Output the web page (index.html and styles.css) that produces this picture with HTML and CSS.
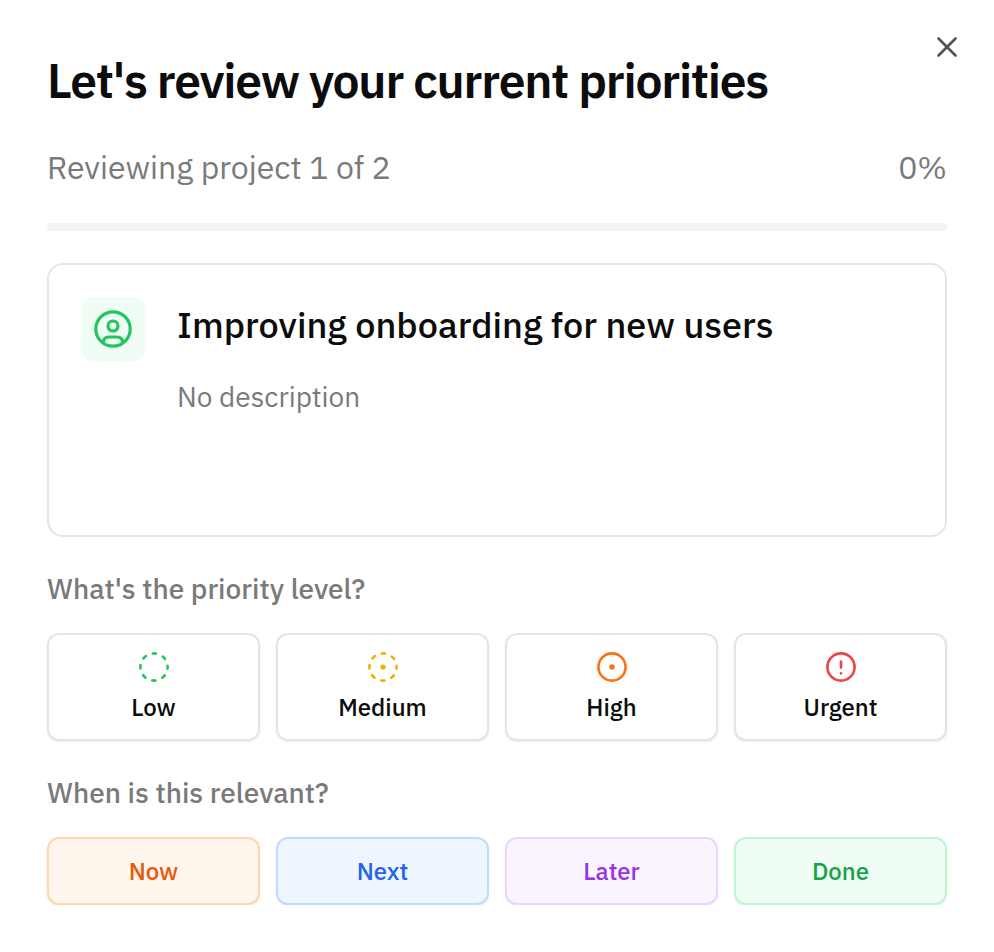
FILE: index.html
```html
<!DOCTYPE html>
<html lang="en">

<head>
    <meta charset="UTF-8">
    <title>Review priorities</title>
    <link rel="stylesheet" href="styles.css">
</head>

<body>
    <div class="modal">
        <button class="close" aria-label="Close">
            <svg width="28" height="28" viewBox="0 0 28 28" fill="none" stroke="#525252" stroke-width="2.6" stroke-linecap="round">
                <path d="M5.5 5.5 L22.5 22.5 M22.5 5.5 L5.5 22.5" />
            </svg>
        </button>

        <h1>Let's review your current priorities</h1>

        <div class="progress-info">
            <span>Reviewing project 1 of 2</span>
            <span>0%</span>
        </div>
        <div class="progress"></div>

        <div class="project">
            <div class="project-icon">
                <svg width="40" height="40" viewBox="0 0 40 40" fill="none" stroke="#22c55e" stroke-width="3.2">
                    <circle cx="20" cy="20" r="17.2" />
                    <circle cx="20" cy="17" r="5" />
                    <path d="M10.5 33 C10.5 29.5 13 28 16 28 H24 C27 28 29.5 29.5 29.5 33" />
                </svg>
            </div>
            <div class="project-text">
                <h2>Improving onboarding for new users</h2>
                <p>No description</p>
            </div>
        </div>

        <h3>What's the priority level?</h3>
        <div class="options">
            <button class="option">
                <svg width="30" height="30" viewBox="0 0 30 30" fill="none" stroke="#22c55e" stroke-width="2.6">
                    <circle class="dashed" cx="15" cy="15" r="13.6" />
                </svg>
                Low
            </button>
            <button class="option">
                <svg width="30" height="30" viewBox="0 0 30 30" fill="none" stroke="#eab308" stroke-width="2.6">
                    <circle class="dashed" cx="15" cy="15" r="13.6" />
                    <circle cx="15" cy="15" r="2.6" fill="#eab308" stroke="none" />
                </svg>
                Medium
            </button>
            <button class="option">
                <svg width="30" height="30" viewBox="0 0 30 30" fill="none" stroke="#f97316" stroke-width="2.6">
                    <circle cx="15" cy="15" r="13.6" />
                    <circle cx="15" cy="15" r="2.8" fill="#f97316" stroke="none" />
                </svg>
                High
            </button>
            <button class="option">
                <svg width="30" height="30" viewBox="0 0 30 30" fill="none" stroke="#ef4444" stroke-width="2.6">
                    <circle cx="15" cy="15" r="13.6" />
                    <path d="M15 9.5 V15.5 M15 21.2 V21.4" stroke-linecap="round" />
                </svg>
                Urgent
            </button>
        </div>

        <h3 class="when">When is this relevant?</h3>
        <div class="options tags">
            <button class="tag now">Now</button>
            <button class="tag next">Next</button>
            <button class="tag later">Later</button>
            <button class="tag done">Done</button>
        </div>
    </div>
</body>

</html>
```

FILE: styles.css
```css
* {
    margin: 0;
    padding: 0;
    box-sizing: border-box;
}

body {
    font-family: "IBM Plex Sans", Inter, "Noto Sans", sans-serif;
    background-color: #fff;
    color: #0c0c0c;
}

.modal {
    position: relative;
    padding: 52px 47px 0;
}

.close {
    position: absolute;
    top: 33px;
    right: 33px;
    background: none;
    border: none;
    display: flex;
}

h1 {
    font-size: 48px;
    line-height: 56px;
    font-weight: 600;
    letter-spacing: -1.2px;
}

.progress-info {
    display: flex;
    justify-content: space-between;
    margin-top: 39px;
    font-size: 32px;
    line-height: 40px;
    color: #7a7a7a;
}

.progress {
    height: 8px;
    margin-top: 36px;
    background-color: #f4f4f4;
    border-radius: 4px;
}

.project {
    display: flex;
    gap: 32px;
    height: 274px;
    margin-top: 32px;
    padding: 32px;
    border: 2px solid #e5e5e5;
    border-radius: 16px;
}

.project-icon {
    width: 64px;
    height: 64px;
    display: flex;
    align-items: center;
    justify-content: center;
    background-color: #f0fdf4;
    border-radius: 12px;
}

.project-text {
    padding-top: 6px;
}

h2 {
    font-size: 36px;
    line-height: 44px;
    font-weight: 500;
}

.project p {
    margin-top: 32px;
    font-size: 28px;
    line-height: 36px;
    color: #7a7a7a;
}

h3 {
    margin-top: 35px;
    font-size: 28px;
    line-height: 34px;
    font-weight: 500;
    color: #7a7a7a;
}

.options {
    display: grid;
    grid-template-columns: repeat(4, 1fr);
    gap: 16px;
    margin-top: 27px;
}

.option,
.tag {
    font-family: inherit;
    font-size: 24px;
    font-weight: 500;
    border-radius: 12px;
    box-shadow: 0 1px 2px rgba(0, 0, 0, 0.08);
}

.option {
    height: 108px;
    display: flex;
    flex-direction: column;
    align-items: center;
    gap: 9px;
    padding-top: 17px;
    background: #fff;
    color: #0c0c0c;
    border: 2px solid #e5e5e5;
}

/* 8 dashes round the circle, one centred on top */
.dashed {
    stroke-dasharray: 3.4 7.28;
    stroke-dashoffset: 1.7;
    stroke-linecap: round;
}

.tag {
    height: 68px;
    border: 2px solid;
}

.now {
    background-color: #fff7ed;
    border-color: #fed7aa;
    color: #ea580c;
}

.next {
    background-color: #eff6ff;
    border-color: #bfdbfe;
    color: #2563eb;
}

.later {
    background-color: #faf5ff;
    border-color: #e9d5ff;
    color: #9333ea;
}

.done {
    background-color: #f0fdf4;
    border-color: #bbf7d0;
    color: #16a34a;
}
```
